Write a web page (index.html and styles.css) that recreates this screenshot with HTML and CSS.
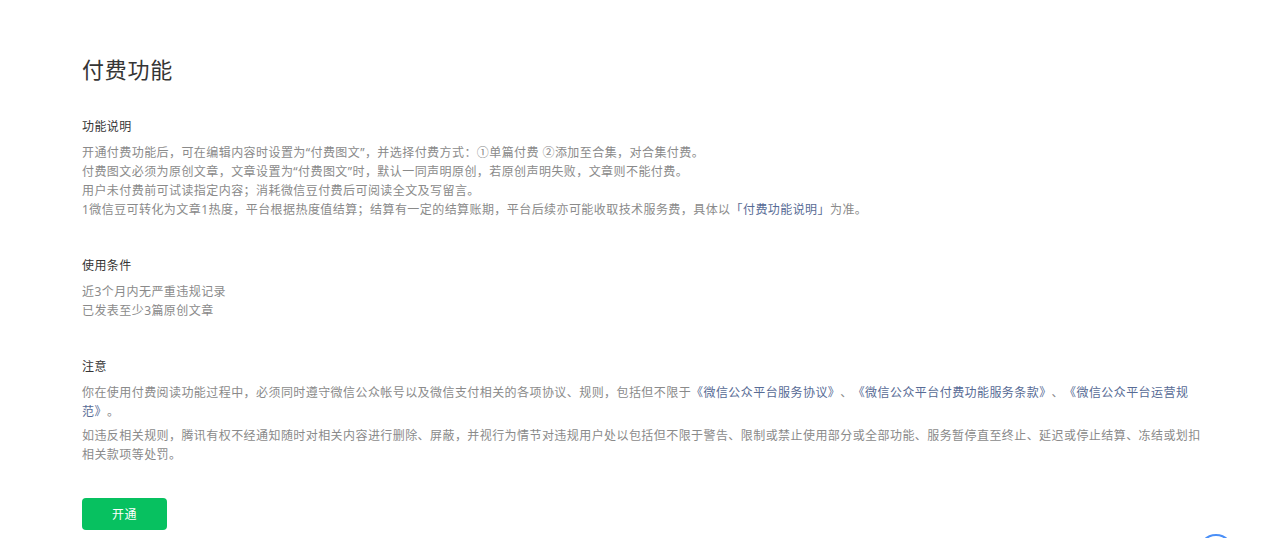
FILE: index.html
```html
<!DOCTYPE html>
<html lang="zh-CN">
<head>
    <meta charset="UTF-8">
    <meta name="viewport" content="width=device-width, initial-scale=1.0">
    <title>付费功能</title>
    <link rel="stylesheet" href="styles.css">
</head>
<body>
    <div class="page">
        <h1 class="page-title">付费功能</h1>

        <div class="section">
            <h3 class="section-title">功能说明</h3>
            <p class="section-text">
                开通付费功能后，可在编辑内容时设置为“付费图文”，并选择付费方式：①单篇付费 ②添加至合集，对合集付费。<br>
                付费图文必须为原创文章，文章设置为“付费图文”时，默认一同声明原创，若原创声明失败，文章则不能付费。<br>
                用户未付费前可试读指定内容；消耗微信豆付费后可阅读全文及写留言。<br>
                1微信豆可转化为文章1热度，平台根据热度值结算；结算有一定的结算账期，平台后续亦可能收取技术服务费，具体以<a class="link" href="#">「付费功能说明」</a>为准。
            </p>
        </div>

        <div class="section">
            <h3 class="section-title">使用条件</h3>
            <p class="section-text">
                近3个月内无严重违规记录<br>
                已发表至少3篇原创文章
            </p>
        </div>

        <div class="section">
            <h3 class="section-title">注意</h3>
            <p class="section-text">你在使用付费阅读功能过程中，必须同时遵守微信公众帐号以及微信支付相关的各项协议、规则，包括但不限于<a class="link" href="#">《微信公众平台服务协议》</a>、<a class="link" href="#">《微信公众平台付费功能服务条款》</a>、<a class="link" href="#">《微信公众平台运营规范》</a>。</p>
            <p class="section-text">如违反相关规则，腾讯有权不经通知随时对相关内容进行删除、屏蔽，并视行为情节对违规用户处以包括但不限于警告、限制或禁止使用部分或全部功能、服务暂停直至终止、延迟或停止结算、冻结或划扣相关款项等处罚。</p>
        </div>

        <div class="actions">
            <button class="btn-primary">开通</button>
        </div>
    </div>

    <div class="float-help"></div>
</body>
</html>
```

FILE: styles.css
```css
body {
    margin: 0;
    font-family: "Noto Sans", "Noto Sans CJK SC", "Microsoft YaHei", sans-serif;
    text-spacing-trim: space-all;
    background: #ffffff;
    color: #353535;
}

.page {
    padding: 53px 78px 0 82px;
}

.page-title {
    margin: 0;
    font-size: 22px;
    font-weight: normal;
    line-height: 32px;
    letter-spacing: 0.75px;
    color: #353535;
}

.section {
    margin-top: 32px;
}

.section + .section {
    margin-top: 37px;
}

.section-title {
    margin: 0 0 7px;
    font-size: 12px;
    font-weight: normal;
    line-height: 19px;
    letter-spacing: 0.43px;
    color: #353535;
}

.section-text {
    margin: 0;
    font-size: 12px;
    line-height: 19px;
    letter-spacing: 0.43px;
    color: #8a8a8a;
}

.section-text + .section-text {
    margin-top: 5px;
}

.link {
    color: #576b95;
    text-decoration: none;
}

.actions {
    margin-top: 34px;
}

.btn-primary {
    width: 85px;
    height: 32px;
    border: none;
    border-radius: 4px;
    background: #07c160;
    color: #ffffff;
    font-family: inherit;
    font-size: 12px;
    letter-spacing: 0.4px;
    cursor: pointer;
}

.float-help {
    position: fixed;
    left: 1198px;
    top: 534px;
    width: 36px;
    height: 36px;
    box-sizing: border-box;
    border: 2px solid #4a8ff7;
    border-radius: 50%;
    background: #ffffff;
}
```
